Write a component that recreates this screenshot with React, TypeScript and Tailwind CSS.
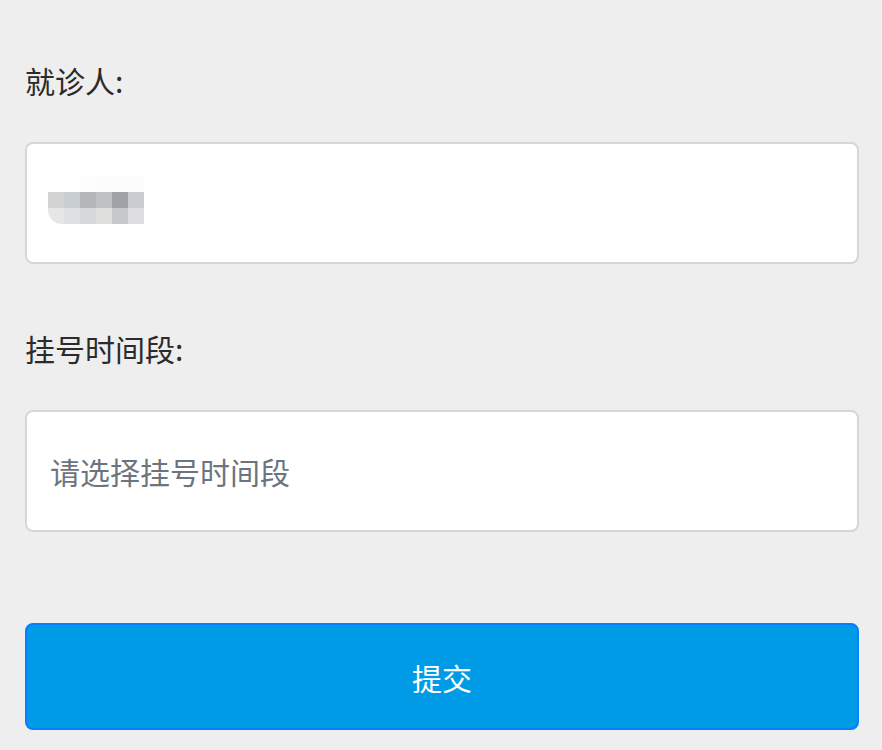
const blurRows = [
  ['#ffffff', '#ffffff', '#fdfdfd', '#fcfcfc', '#fcfcfc', '#fcfcfc'],
  ['#d2d2d2', '#c9ced2', '#b5b6b8', '#bfc0c2', '#a0a4a8', '#c9cbd0'],
  ['#e6e6e6', '#dfe0e4', '#d7d8da', '#dfdfdd', '#c4c8cb', '#dedee0'],
];

export default function App() {
  return (
    <div className="min-h-[750px] bg-[#eeeeee] pl-[25px] pr-[23px] pt-[64px] pb-5 font-['Noto_Sans_CJK_SC',sans-serif] text-[#2b2b2b]">
      <label className="block text-[30px] leading-[32px]">就诊人:</label>

      <div className="mt-[46px] flex h-[122px] items-center rounded-lg border-2 border-[#d3d6db] bg-white pl-[21px]">
        <div className="mt-[-6px] flex flex-col">
          {blurRows.map((row, i) => (
            <div key={i} className="flex">
              {row.map((c, j) => (
                <div
                  key={j}
                  className={`h-4 w-4 ${i === 2 && j === 0 ? 'rounded-bl-[14px]' : ''}`}
                  style={{ backgroundColor: c }}
                />
              ))}
            </div>
          ))}
        </div>
      </div>

      <label className="mt-[68px] block text-[30px] leading-[32px]">挂号时间段:</label>

      <div className="mt-[46px] flex h-[122px] items-center rounded-lg border-2 border-[#d3d6db] bg-white pl-[23px]">
        <span className="text-[30px] leading-[30px] text-[#6c757d]">请选择挂号时间段</span>
      </div>

      <button className="mt-[91px] flex h-[107px] w-full items-center justify-center rounded-lg border-2 border-[#0a7cff] bg-[#009be6] text-[30px] leading-[30px] text-white">
        提交
      </button>
    </div>
  );
}
